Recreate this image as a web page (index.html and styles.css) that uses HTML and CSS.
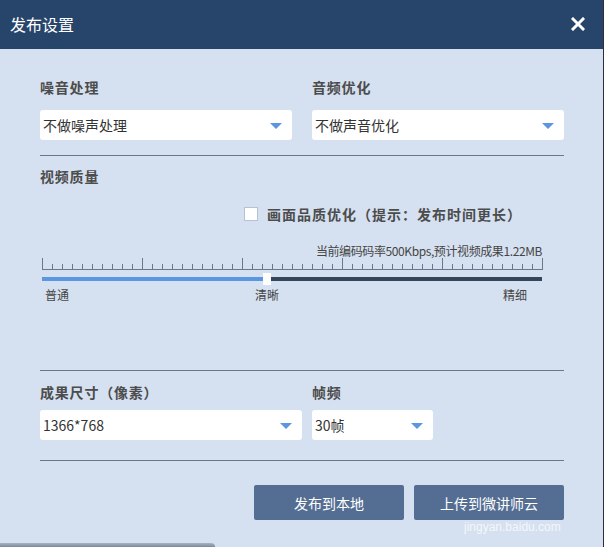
FILE: index.html
```html
<!DOCTYPE html>
<html lang="zh-CN">
<head>
<meta charset="utf-8">
<title>发布设置</title>
<link rel="stylesheet" href="styles.css">
</head>
<body>
<div class="dialog">
  <div class="titlebar">
    <span class="title">发布设置</span>
    <span class="close">
      <svg width="14" height="14" viewBox="0 0 14 14"><path d="M2 2L12 12M12 2L2 12" stroke="#fff" stroke-width="3" stroke-linecap="square"/></svg>
    </span>
  </div>
  <div class="content">
    <div class="grid2">
      <div class="field">
        <div class="label">噪音处理</div>
        <div class="select"><span>不做噪声处理</span><i class="arrow"></i></div>
      </div>
      <div class="field">
        <div class="label">音频优化</div>
        <div class="select"><span>不做声音优化</span><i class="arrow"></i></div>
      </div>
    </div>
    <div class="divider d1"></div>

    <div class="label l-video">视频质量</div>
    <div class="check-row">
      <span class="checkbox"></span>
      <span class="check-text">画面品质优化（提示：发布时间更长）</span>
    </div>
    <div class="rate">当前编码码率500Kbps,预计视频成果1.22MB</div>
    <svg class="ruler" width="502" height="12" viewBox="0 0 502 12">
      <path d="M0 11.5H501" stroke="#6b7689" stroke-width="1"/>
      <path stroke="#6b7689" stroke-width="1" d="M0.5 0V11M10.5 6V11M20.5 6V11M30.5 6V11M40.5 6V11M50.5 6V11M60.5 6V11M70.5 6V11M80.5 6V11M90.5 6V11M100.5 0V11M110.5 6V11M120.5 6V11M130.5 6V11M140.5 6V11M150.5 6V11M160.5 6V11M170.5 6V11M180.5 6V11M190.5 6V11M200.5 0V11M210.5 6V11M220.5 6V11M230.5 6V11M240.5 6V11M250.5 6V11M260.5 6V11M270.5 6V11M280.5 6V11M290.5 6V11M300.5 0V11M310.5 6V11M320.5 6V11M330.5 6V11M340.5 6V11M350.5 6V11M360.5 6V11M370.5 6V11M380.5 6V11M390.5 6V11M400.5 0V11M410.5 6V11M420.5 6V11M430.5 6V11M440.5 6V11M450.5 6V11M460.5 6V11M470.5 6V11M480.5 6V11M490.5 6V11M500.5 0V11"/>
    </svg>
    <div class="track">
      <div class="fill"></div>
      <div class="thumb"></div>
    </div>
    <div class="scale">
      <span class="s1">普通</span>
      <span class="s2">清晰</span>
      <span class="s3">精细</span>
    </div>

    <div class="divider d2"></div>
    <div class="grid-out">
      <div class="field">
        <div class="label">成果尺寸（像素）</div>
        <div class="select"><span>1366*768</span><i class="arrow"></i></div>
      </div>
      <div class="field">
        <div class="label">帧频</div>
        <div class="select"><span>30帧</span><i class="arrow"></i></div>
      </div>
    </div>
    <div class="divider d3"></div>

    <div class="buttons">
      <button class="btn">发布到本地</button>
      <button class="btn">上传到微讲师云</button>
    </div>
  </div>
  <div class="watermark">jingyan.baidu.com</div>
  <div class="shadow-bar"></div>
</div>
</body>
</html>
```
FILE: styles.css
```css
* { box-sizing: border-box; }
html, body {
  margin: 0;
  padding: 0;
  width: 604px;
  height: 547px;
  overflow: hidden;
  background: #d5e1f0;
  font-family: "Noto Sans CJK SC", "Liberation Sans", sans-serif;
}
.dialog {
  position: relative;
  width: 604px;
  height: 547px;
  background: #d5e1f0;
  border-right: 1px solid #2b3038;
}
.titlebar {
  height: 49px;
  background: #27446b;
  display: flex;
  align-items: center;
  justify-content: space-between;
  padding: 0 18px 0 10px;
}
.title {
  color: #fff;
  font-size: 16px;
  line-height: 20px;
  margin-top: -1px;
}
.close {
  display: flex;
  width: 14px;
  height: 14px;
  margin-top: -1px;
}
.content {
  padding: 28px 39px 0 40px;
}
.grid2 {
  display: grid;
  grid-template-columns: 252px 252px;
  column-gap: 20px;
}
.grid-out {
  display: grid;
  grid-template-columns: 262px 121px;
  column-gap: 10px;
}
.label {
  font-size: 14px;
  line-height: 20px;
  height: 20px;
  font-weight: bold;
  color: #4c4c4c;
  letter-spacing: 0.8px;
}
.select {
  margin-top: 13px;
  height: 30px;
  background: #fff;
  border-radius: 3px;
  display: flex;
  align-items: center;
  justify-content: space-between;
  padding: 0 10px 0 3px;
  font-size: 14px;
  color: #333;
}
.select span { line-height: 20px; margin-top: -1px; }
.arrow {
  display: block;
  width: 0;
  height: 0;
  border-left: 6px solid transparent;
  border-right: 6px solid transparent;
  border-top: 6px solid #5b96e0;
  margin-top: 1px;
}
.divider {
  height: 1px;
  background: #6b7689;
}
.d1 { margin-top: 15px; }
.l-video { margin-top: 10px; }
.check-row {
  margin-top: 18px;
  height: 20px;
  display: flex;
  align-items: center;
  padding-left: 204px;
}
.checkbox {
  width: 14px;
  height: 14px;
  background: #fff;
  border: 1px solid #b6c2d1;
}
.check-text {
  margin-left: 9px;
  font-size: 14px;
  font-weight: bold;
  color: #4c4c4c;
  line-height: 20px;
  letter-spacing: 1px;
  margin-top: -1px;
}
.rate {
  margin-top: 19px;
  height: 16px;
  line-height: 16px;
  font-size: 12px;
  color: #454545;
  text-align: right;
  padding-right: 22px;
  letter-spacing: -0.4px;
}
.ruler {
  display: block;
  margin-left: 2px;
  margin-top: -1px;
}
.track {
  position: relative;
  margin-top: 7px;
  margin-left: 2px;
  width: 500px;
  height: 4px;
  background: #34465b;
}
.fill {
  width: 223px;
  height: 4px;
  background: #5b97e1;
}
.thumb {
  position: absolute;
  left: 221px;
  top: -4px;
  width: 8px;
  height: 12px;
  background: #fff;
}
.scale {
  margin-top: 6px;
  display: flex;
  font-size: 12px;
  line-height: 16px;
  height: 16px;
  color: #454545;
}
.s1 { margin-left: 5px; }
.s2 { margin-left: 186px; }
.s3 { margin-left: 224px; }
.d2 { margin-top: 67px; }
.grid-out .label { margin-top: 11px; }
.grid-out .select { margin-top: 8px; }
.d3 { margin-top: 20px; }
.buttons {
  margin-top: 24px;
  display: flex;
  justify-content: flex-end;
  gap: 10px;
}
.btn {
  width: 150px;
  height: 35px;
  border: none;
  border-radius: 2px;
  background: #546e93;
  color: #fff;
  font-family: "Noto Sans CJK SC", "Liberation Sans", sans-serif;
  font-size: 14px;
  padding: 0;
}
.watermark {
  position: absolute;
  left: 464px;
  top: 520px;
  font-family: "Liberation Sans", sans-serif;
  font-size: 12px;
  color: rgba(255, 255, 255, 0.75);
}
.shadow-bar {
  position: absolute;
  left: 0;
  bottom: 0;
  width: 215px;
  height: 4px;
  background: linear-gradient(#a9b4c2, #7c8899);
  border-top-right-radius: 4px;
}
```
